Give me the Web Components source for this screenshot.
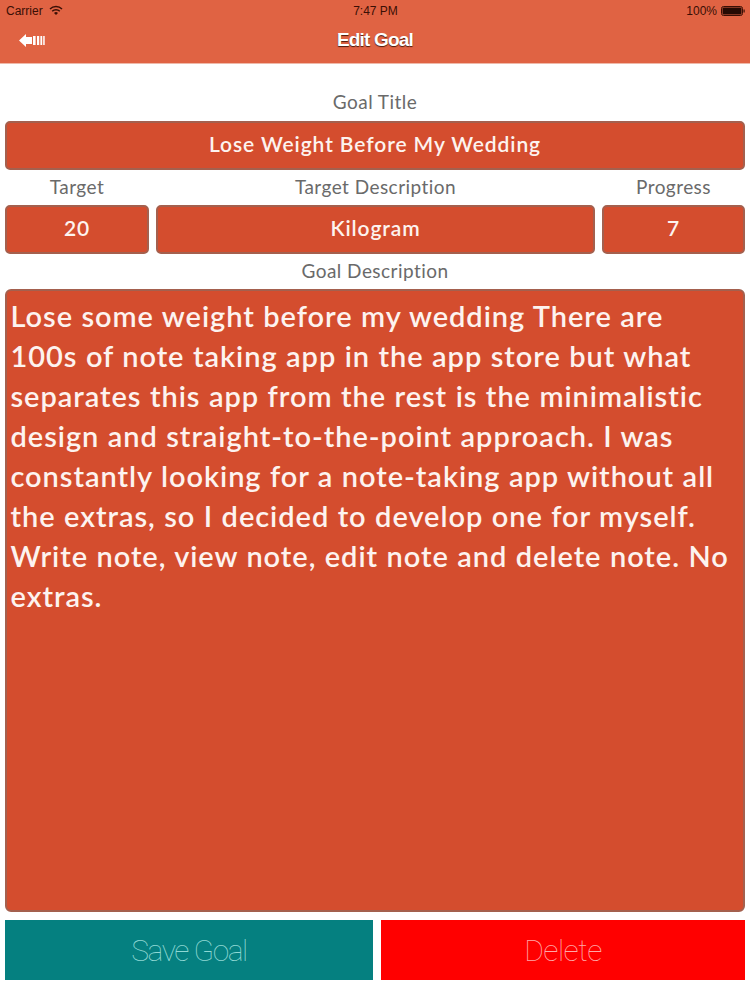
<!DOCTYPE html>
<html>
<head>
<meta charset="utf-8">
<title>Edit Goal</title>
<style>
    html, body { margin: 0; padding: 0; background: #fff; }
    body { font-family: "Lato", "Liberation Sans", sans-serif; }
</style>
</head>
<body>
<edit-goal-page></edit-goal-page>

<script>
class StatusBar extends HTMLElement {
    connectedCallback() {
        this.attachShadow({ mode: 'open' });
        this.shadowRoot.innerHTML = `
            <style>
                :host {
                    display: grid;
                    grid-template-columns: 1fr auto 1fr;
                    align-items: center;
                    height: 21px;
                    padding: 0 5px 0 6px;
                    font: 12px "Liberation Sans", sans-serif;
                    color: #3a0f05;
                }
                .left { display: flex; align-items: center; gap: 6px; }
                .right { display: flex; align-items: center; justify-content: flex-end; gap: 4px; }
                svg { display: block; }
            </style>
            <div class="left">
                <span>Carrier</span>
                <svg width="14" height="11" viewBox="0 0 14 11" fill="none" stroke="#3a0f05" stroke-width="1.5">
                    <path d="M1 4 A8.5 8.5 0 0 1 13 4"/>
                    <path d="M3.2 6.2 A5.4 5.4 0 0 1 10.8 6.2"/>
                    <path d="M7 10 L5 8 A2.8 2.8 0 0 1 9 8 Z" fill="#3a0f05" stroke="none"/>
                </svg>
            </div>
            <span>7:47 PM</span>
            <div class="right">
                <span>100%</span>
                <svg width="24" height="10" viewBox="0 0 24 10">
                    <rect x="0.5" y="0.5" width="21" height="9" rx="2" fill="none" stroke="#3a0f05"/>
                    <rect x="1.5" y="1.5" width="19" height="7" rx="1" fill="#260a03"/>
                    <rect x="22.5" y="3.5" width="1.2" height="3" fill="#3a0f05"/>
                </svg>
            </div>
        `;
    }
}

class NavBar extends HTMLElement {
    connectedCallback() {
        this.attachShadow({ mode: 'open' });
        this.shadowRoot.innerHTML = `
            <style>
                :host {
                    display: block;
                    background: #e06343;
                    border-bottom: 1px solid #efb9a9;
                    height: 63px;
                }
                .bar {
                    display: grid;
                    grid-template-columns: 1fr auto 1fr;
                    align-items: center;
                    height: 38px;
                    padding: 0 19px;
                }
                svg { display: block; }
                .title {
                    font: bold 19px "Liberation Sans", sans-serif;
                    letter-spacing: -0.8px;
                    color: #fff;
                    text-shadow: 0 1px 1px #4a1a0c;
                }
            </style>
            <status-bar></status-bar>
            <div class="bar">
                <svg width="26" height="15" viewBox="0 0 26 15" fill="#fff">
                    <path d="M0 7.5 L7 1 V4 H13 V11 H7 V14 Z"/>
                    <rect x="14" y="3" width="2.6" height="9"/>
                    <rect x="18" y="3" width="2.2" height="9"/>
                    <rect x="21.4" y="3" width="1.8" height="9"/>
                    <rect x="24.2" y="3" width="1.5" height="9"/>
                </svg>
                <span class="title"><slot></slot></span>
            </div>
        `;
    }
}

class FieldLabel extends HTMLElement {
    connectedCallback() {
        this.attachShadow({ mode: 'open' });
        this.shadowRoot.innerHTML = `
            <style>
                :host {
                    display: block;
                    text-align: center;
                    font-size: 19px;
                    line-height: 22px;
                    letter-spacing: 0.45px;
                    color: #6a6a6a;
                }
            </style>
            <slot></slot>
        `;
    }
}

class ValueBox extends HTMLElement {
    connectedCallback() {
        this.attachShadow({ mode: 'open' });
        this.shadowRoot.innerHTML = `
            <style>
                :host {
                    display: flex;
                    align-items: center;
                    justify-content: center;
                    height: 49px;
                    box-sizing: border-box;
                    padding-bottom: 4px;
                    background: #d44d2e;
                    border: 2px solid #a4604e;
                    border-radius: 5px;
                    color: #fdf3ef;
                    font-size: 21px;
                    font-weight: 600;
                    letter-spacing: 0.9px;
                }
            </style>
            <slot></slot>
        `;
    }
}

class NoteBox extends HTMLElement {
    connectedCallback() {
        this.attachShadow({ mode: 'open' });
        this.shadowRoot.innerHTML = `
            <style>
                :host {
                    display: block;
                    height: 623px;
                    box-sizing: border-box;
                    padding: 5px 3.5px;
                    background: #d44d2e;
                    border: 2px solid #a4604e;
                    border-radius: 6px;
                    color: #fdf3ef;
                    font-size: 29px;
                    font-weight: 600;
                    line-height: 40px;
                    letter-spacing: 0.95px;
                    word-spacing: 0.3px;
                    white-space: nowrap;
                }
            </style>
            <slot></slot>
        `;
    }
}

class ActionButton extends HTMLElement {
    connectedCallback() {
        this.attachShadow({ mode: 'open' });
        this.shadowRoot.innerHTML = `
            <style>
                :host {
                    display: flex;
                    align-items: center;
                    justify-content: center;
                    height: 60px;
                    background: var(--bg);
                    color: var(--fg);
                    font-family: "Roboto", "Liberation Sans", sans-serif;
                    font-size: 30px;
                    font-weight: 100;
                    letter-spacing: var(--track);
                }
            </style>
            <slot></slot>
        `;
    }
}

class EditGoalPage extends HTMLElement {
    connectedCallback() {
        this.attachShadow({ mode: 'open' });
        this.shadowRoot.innerHTML = `
            <style>
                :host { display: block; width: 750px; }
                main { padding: 27px 5px 0; }
                .first { margin-bottom: 8px; }
                .row {
                    display: grid;
                    grid-template-columns: 144px 1fr 143px;
                    column-gap: 7px;
                }
                .labels { margin: 6px 0 7px; }
                .desc { margin: 6px 0 7px; }
                .actions {
                    display: grid;
                    grid-template-columns: 368px 1fr;
                    column-gap: 8px;
                    margin-top: 8px;
                }
                .save { --bg: #058080; --fg: #8fd8d4; --track: -1.5px; }
                .delete { --bg: #ff0000; --fg: #ffa8a8; --track: -0.5px; }
            </style>
            <nav-bar>Edit Goal</nav-bar>
            <main>
                <field-label class="first">Goal Title</field-label>
                <value-box>Lose Weight Before My Wedding</value-box>
                <div class="row labels">
                    <field-label>Target</field-label>
                    <field-label>Target Description</field-label>
                    <field-label>Progress</field-label>
                </div>
                <div class="row">
                    <value-box>20</value-box>
                    <value-box>Kilogram</value-box>
                    <value-box>7</value-box>
                </div>
                <field-label class="desc">Goal Description</field-label>
                <note-box>Lose some weight before my wedding There are<br>100s of note taking app in the app store but what<br>separates this app from the rest is the minimalistic<br>design and straight-to-the-point approach. I was<br>constantly looking for a note-taking app without all<br>the extras, so I decided to develop one for myself.<br>Write note, view note, edit note and delete note. No<br>extras.</note-box>
                <div class="actions">
                    <action-button class="save">Save Goal</action-button>
                    <action-button class="delete">Delete</action-button>
                </div>
            </main>
        `;
    }
}

customElements.define('status-bar', StatusBar);
customElements.define('nav-bar', NavBar);
customElements.define('field-label', FieldLabel);
customElements.define('value-box', ValueBox);
customElements.define('note-box', NoteBox);
customElements.define('action-button', ActionButton);
customElements.define('edit-goal-page', EditGoalPage);
</script>
</body>
</html>
